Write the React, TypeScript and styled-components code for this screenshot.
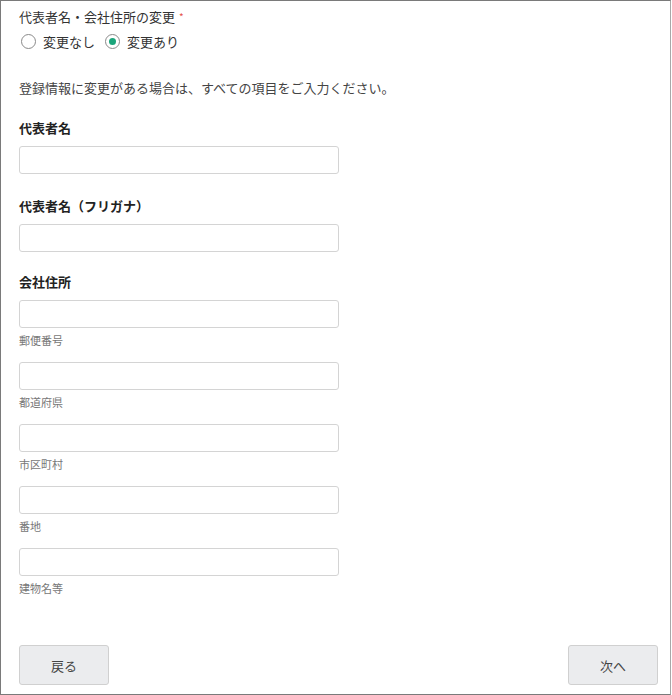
import { useState } from 'react';
import styled, { createGlobalStyle } from 'styled-components';

const GlobalStyle = createGlobalStyle`
	html, body {
		margin: 0;
		padding: 0;
		background: #fff;
	}
	body {
		font-family: "Noto Sans CJK JP", "Noto Sans", sans-serif;
		color: #333;
	}
	* {
		box-sizing: border-box;
	}
`;

const Frame = styled.div`
	width: 671px;
	height: 695px;
	border: 1px solid #7a7a7a;
	border-right-color: #a8a8a8;
	padding: 6px 12px 9px 18px;
	display: flex;
	flex-direction: column;
	background: #fff;
`;

const Title = styled.div`
	font-size: 13px;
	line-height: 20px;
	color: #333;
`;

const Required = styled.span`
	color: #e5534b;
	font-size: 10px;
	margin-left: 4px;
	vertical-align: top;
`;

const RadioRow = styled.div`
	display: flex;
	align-items: center;
	gap: 10px;
	margin-top: 4px;
	height: 20px;
	padding-left: 2px;
`;

const RadioLabel = styled.label`
	display: flex;
	align-items: center;
	gap: 7px;
	font-size: 13px;
	color: #333;
	cursor: pointer;
`;

const RadioCircle = styled.span<{ $checked: boolean }>`
	width: 15px;
	height: 15px;
	border-radius: 50%;
	border: 1.5px solid #8a8a8a;
	display: flex;
	align-items: center;
	justify-content: center;
	background: #fff;

	&::after {
		content: '';
		width: 7px;
		height: 7px;
		border-radius: 50%;
		background: ${(p) => (p.$checked ? '#1ba57b' : 'transparent')};
	}
`;

const Note = styled.p`
	margin: 27px 0 0;
	font-size: 13px;
	line-height: 20px;
	color: #444;
`;

const FieldLabel = styled.div<{ $gap: number }>`
	margin-top: ${(p) => p.$gap}px;
	font-size: 13px;
	line-height: 20px;
	font-weight: 700;
	color: #222;
`;

const TextInput = styled.input<{ $gap: number }>`
	display: block;
	margin-top: ${(p) => p.$gap}px;
	width: 320px;
	height: 28px;
	border: 1.5px solid #d4d4d4;
	border-radius: 3px;
	padding: 0 8px;
	font-family: inherit;
	font-size: 13px;
	outline: none;
`;

const SubLabel = styled.div`
	margin-top: 4px;
	font-size: 11px;
	line-height: 16px;
	color: #777;
`;

const Footer = styled.div`
	margin-top: auto;
	display: flex;
	justify-content: space-between;
	align-items: center;
`;

const Button = styled.button`
	width: 90px;
	height: 40px;
	background: #ebecee;
	border: 1.5px solid #d0d0d0;
	border-radius: 3px;
	font-family: inherit;
	font-size: 13px;
	color: #444;
	cursor: pointer;
`;

const addressParts = ['郵便番号', '都道府県', '市区町村', '番地', '建物名等'];

export default function App() {
	const [changed, setChanged] = useState(true);

	return (
		<>
			<GlobalStyle />
			<Frame>
				<Title>
					代表者名・会社住所の変更<Required>*</Required>
				</Title>
				<RadioRow>
					<RadioLabel onClick={() => setChanged(false)}>
						<RadioCircle $checked={!changed} />
						変更なし
					</RadioLabel>
					<RadioLabel onClick={() => setChanged(true)}>
						<RadioCircle $checked={changed} />
						変更あり
					</RadioLabel>
				</RadioRow>
				<Note>登録情報に変更がある場合は、すべての項目をご入力ください。</Note>

				<FieldLabel $gap={20}>代表者名</FieldLabel>
				<TextInput $gap={8} />

				<FieldLabel $gap={22}>代表者名（フリガナ）</FieldLabel>
				<TextInput $gap={8} />

				<FieldLabel $gap={20}>会社住所</FieldLabel>
				{addressParts.map((part, i) => (
					<div key={part}>
						<TextInput $gap={i === 0 ? 8 : 14} />
						<SubLabel>{part}</SubLabel>
					</div>
				))}

				<Footer>
					<Button>戻る</Button>
					<Button>次へ</Button>
				</Footer>
			</Frame>
		</>
	);
}
